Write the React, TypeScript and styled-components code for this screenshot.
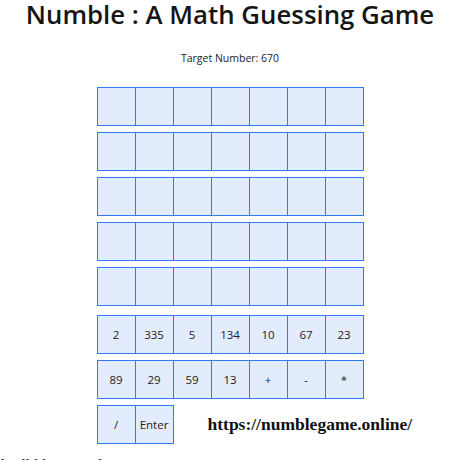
import styled, { createGlobalStyle } from "styled-components";

const GlobalStyle = createGlobalStyle`
  body {
    margin: 0;
    background: #ffffff;
    font-family: "Open Sans", "Noto Sans", sans-serif;
    color: #1a1a1a;
  }
`;

const Page = styled.div`
  width: 460px;
  height: 460px;
  overflow: hidden;
  display: flex;
  flex-direction: column;
  align-items: center;
`;

const Title = styled.h1`
  margin: 0;
  font-size: 25.8px;
  line-height: 28px;
  font-weight: 600;
  color: #151515;
  white-space: nowrap;
`;

const Target = styled.p`
  margin: 22px 0 0;
  font-size: 10.5px;
  line-height: 16px;
  color: #222;
`;

const Board = styled.div`
  margin-top: 21px;
  width: 267px;
  display: flex;
  flex-direction: column;
  gap: 6px;
`;

const Keys = styled.div`
  margin-top: 9px;
  width: 267px;
  display: flex;
  flex-direction: column;
  gap: 6px;
`;

const Row = styled.div`
  display: flex;
  align-items: center;
`;

const Cell = styled.div`
  box-sizing: border-box;
  flex: 0 0 39px;
  width: 39px;
  height: 39px;
  border: 1px solid #2f7bf5;
  background: #e3ecfd;
  display: flex;
  align-items: center;
  justify-content: center;
  font-size: 11.5px;
  color: #222;

  & + & {
    margin-left: -1px;
  }
`;

const Link = styled.span`
  flex: 0 0 auto;
  margin-left: 34px;
  font-family: "Liberation Serif", "Times New Roman", serif;
  font-weight: 700;
  font-size: 17.5px;
  color: #111;
  white-space: nowrap;
`;

const Footer = styled.p`
  align-self: flex-start;
  margin: 12px 0 0 1px;
  font-family: "Liberation Serif", serif;
  font-size: 16px;
  line-height: 20px;
  white-space: nowrap;
`;

const keyRows = [
  ["2", "335", "5", "134", "10", "67", "23"],
  ["89", "29", "59", "13", "+", "-", "*"],
];

export default function App() {
  return (
    <>
      <GlobalStyle />
      <Page>
        <Title>Numble : A Math Guessing Game</Title>
        <Target>Target Number: 670</Target>
        <Board>
          {Array.from({ length: 5 }).map((_, r) => (
            <Row key={r}>
              {Array.from({ length: 7 }).map((_, c) => (
                <Cell key={c} />
              ))}
            </Row>
          ))}
        </Board>
        <Keys>
          {keyRows.map((row, r) => (
            <Row key={r}>
              {row.map((k, c) => (
                <Cell key={c}>{k}</Cell>
              ))}
            </Row>
          ))}
          <Row>
            <Cell>/</Cell>
            <Cell>Enter</Cell>
            <Link>https://numblegame.online/</Link>
          </Row>
        </Keys>
        <Footer>hi, lbl how to play it</Footer>
      </Page>
    </>
  );
}
